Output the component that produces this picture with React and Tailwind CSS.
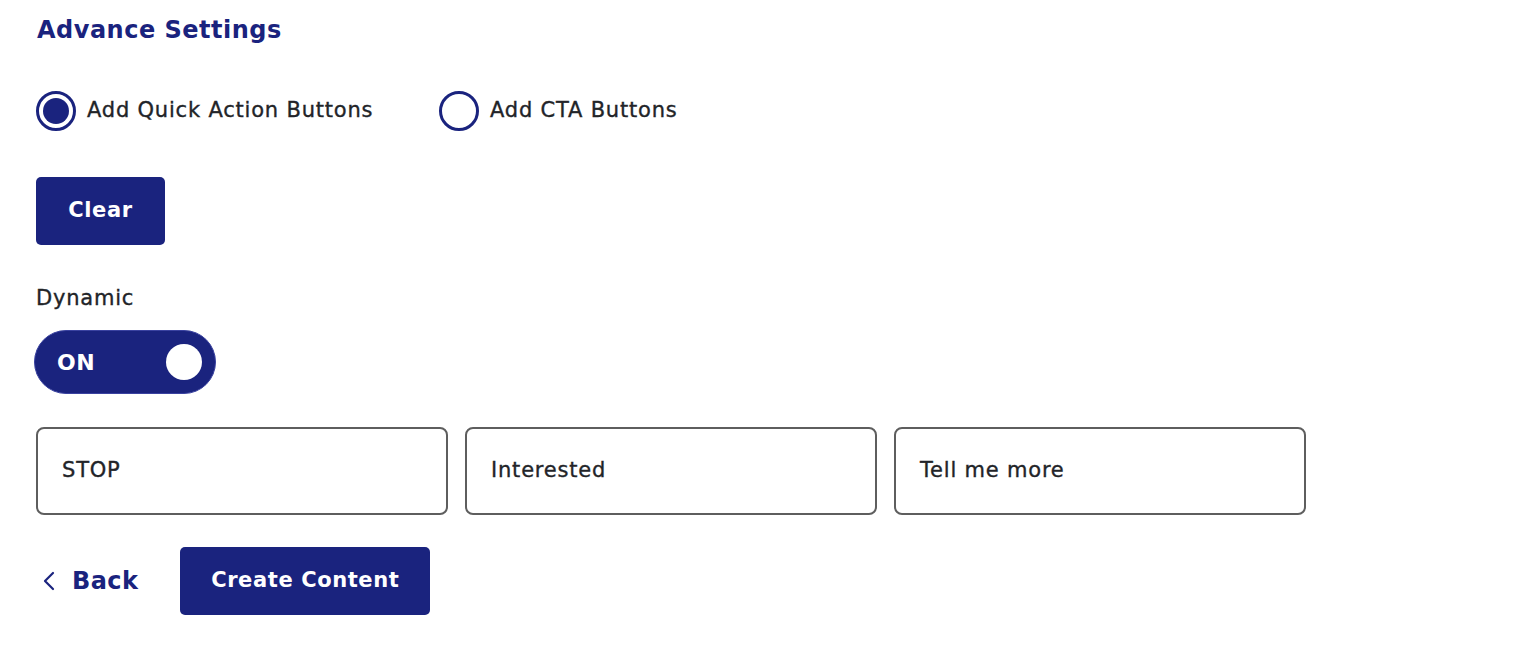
import React from "react";

const NAVY = "bg-[#1a237e]";

function Radio({ checked, label, className = "" }) {
  return (
    <label className={`flex items-center gap-[11px] cursor-pointer ${className}`}>
      <span className="w-[40px] h-[40px] rounded-full border-[3px] border-[#1a237e] flex items-center justify-center">
        {checked && <span className="w-[26px] h-[26px] rounded-full bg-[#1a237e]" />}
      </span>
      <span className="text-[21px] tracking-[0.8px] [-webkit-text-stroke:0.35px_#222428] text-[#222428]">{label}</span>
    </label>
  );
}

function Field({ value }) {
  return (
    <div className="w-[412px] h-[88px] border-2 border-[#5e5e5e] rounded-[8px] flex items-center px-[24px]">
      <span className="text-[21px] tracking-[0.8px] [-webkit-text-stroke:0.35px_#222428] text-[#222428]">{value}</span>
    </div>
  );
}

export default function App() {
  return (
    <div
      className="bg-white w-[1520px] h-[650px] pl-[36px] pt-[12px]"
      style={{ fontFamily: "'DejaVu Sans', sans-serif" }}
    >
      <h1 className="text-[24px] font-bold tracking-[0.5px] text-[#1a237e] leading-[36px] ml-[1px]">Advance Settings</h1>

      <div className="flex items-center mt-[43px]">
        <Radio checked label="Add Quick Action Buttons" className="w-[403px]" />
        <Radio label="Add CTA Buttons" />
      </div>

      <button className={`${NAVY} mt-[46px] w-[129px] h-[68px] rounded-[5px] text-white text-[21px] font-bold tracking-[0.6px]`}>
        Clear
      </button>

      <div className="mt-[38px] text-[21px] tracking-[0.8px] [-webkit-text-stroke:0.35px_#222428] text-[#222428] leading-[30px]">Dynamic</div>

      <div className={`${NAVY} mt-[17px] -ml-[2px] w-[182px] h-[64px] rounded-full border border-[#3a42a0] flex items-center justify-between pl-[22px] pr-[13px]`}>
        <span className="text-white text-[22px] font-bold tracking-[0.6px]">ON</span>
        <span className="w-[36px] h-[36px] rounded-full bg-white" />
      </div>

      <div className="flex gap-[17px] mt-[33px]">
        <Field value="STOP" />
        <Field value="Interested" />
        <Field value="Tell me more" />
      </div>

      <div className="flex items-center mt-[32px]">
        <button className="flex items-center gap-[16px] text-[#1a237e] ml-[6px]">
          <svg width="14" height="22" viewBox="0 0 14 22" fill="none">
            <path d="M11 3 L3 11 L11 19" stroke="#1a237e" strokeWidth="2.2" strokeLinecap="round" strokeLinejoin="round" />
          </svg>
          <span className="text-[24px] font-bold tracking-[0.4px]">Back</span>
        </button>
        <button className={`${NAVY} ml-[42px] w-[250px] h-[68px] rounded-[5px] text-white text-[21px] font-bold tracking-[0.6px]`}>
          Create Content
        </button>
      </div>
    </div>
  );
}
